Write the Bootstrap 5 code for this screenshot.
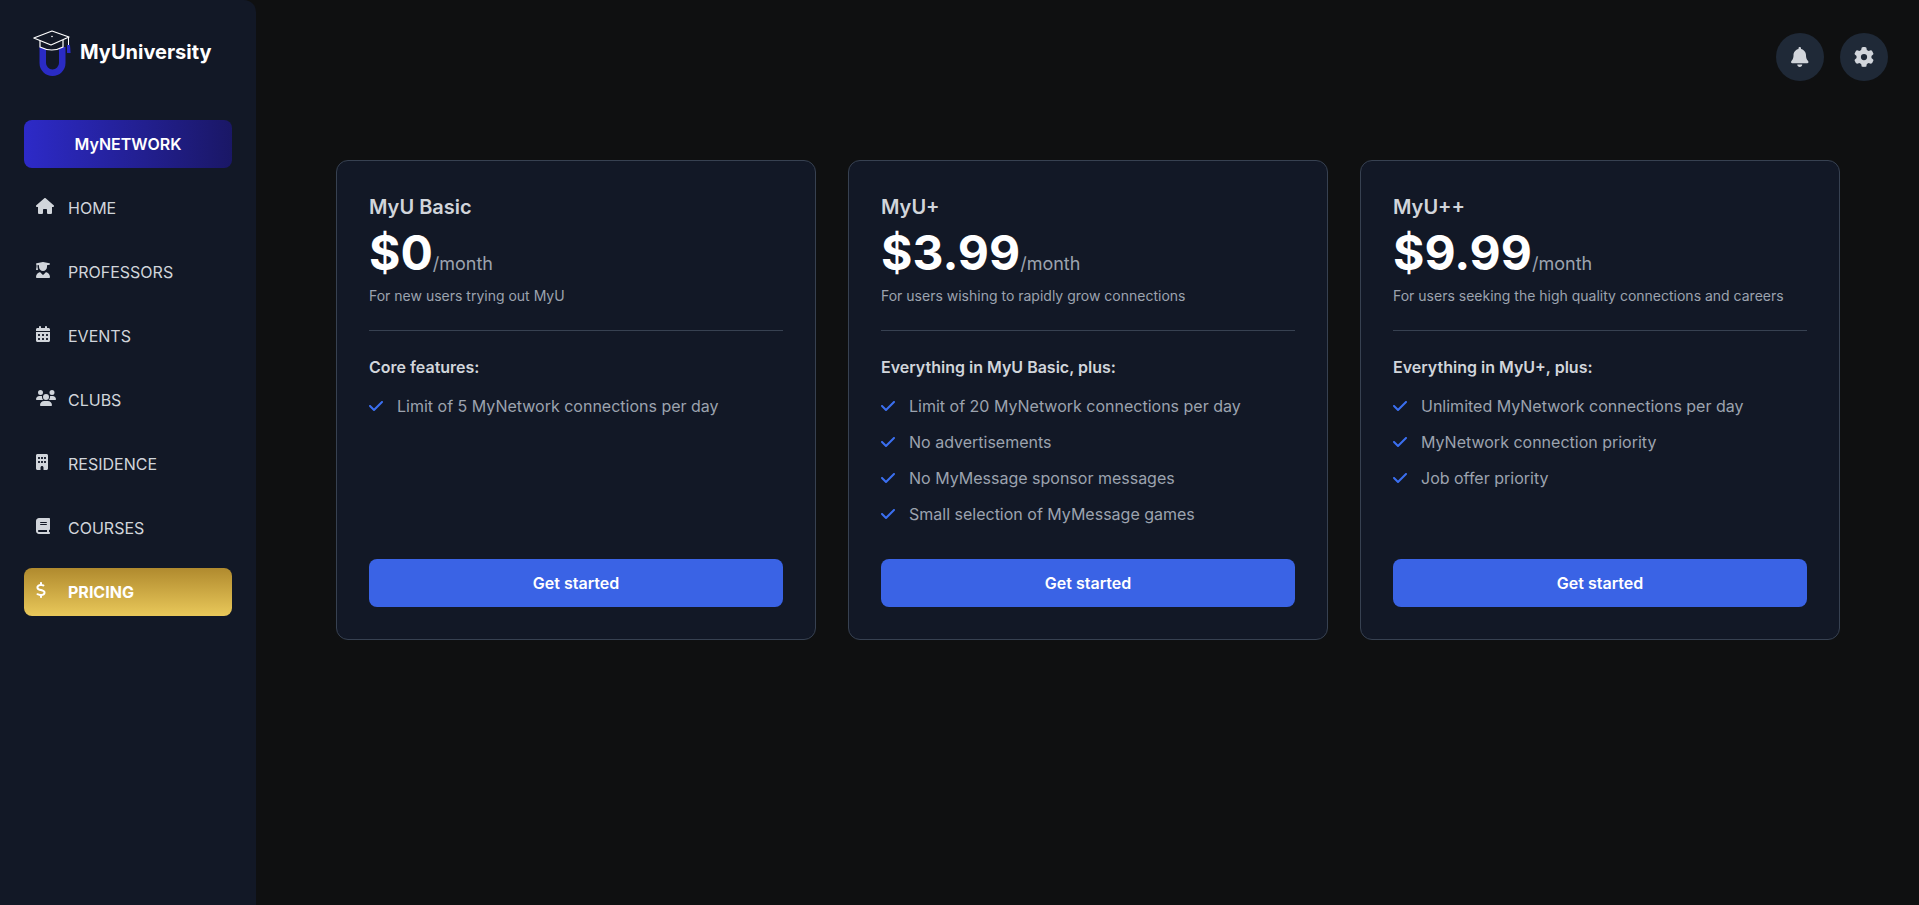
<!DOCTYPE html>
<html lang="en">
<head>
    <meta charset="UTF-8">
    <meta name="viewport" content="width=device-width, initial-scale=1.0">
    <title>MyUniversity - Pricing</title>
    <link href="https://cdn.jsdelivr.net/npm/bootstrap@5.3.0/dist/css/bootstrap.min.css" rel="stylesheet">
    <style>
        body { background: #0f1011; font-family: Inter, "Liberation Sans", sans-serif; color: #d1d5db; }
        .side-bar { width: 256px; height: 905px; background: #121826; border-top-right-radius: 12px; flex-shrink: 0; padding: 24px; }
        .brand-row { height: 48px; margin-bottom: 44px; margin-left: 9px; margin-top: 4px; }
        .brand-row svg { margin-top: 3px; flex-shrink: 0; }
        .brand-name { font-size: 20px; font-weight: 700; color: #fff; margin-left: 9px; }
        .side-link { height: 48px; border-radius: 8px; padding-left: 12px; color: #d1d5db; font-size: 16px; font-weight: 400; text-decoration: none; margin-bottom: 16px; }
        .side-link svg { fill: currentColor; height: 16px; width: auto; margin-top: -4px; }
        .link-ico { width: 32px; display: inline-flex; flex-shrink: 0; }
        .net-btn { background: linear-gradient(to right, #2d2ac8, #1a1766); color: #fff; font-weight: 600; justify-content: center; padding-left: 0; }
        .price-link { background: linear-gradient(to bottom, #b08a2e, #e9c85a); color: #fff; font-weight: 700; }
        .round-btn { width: 48px; height: 48px; border-radius: 50%; background: #1f2937; border: 0; color: #d1d5db; padding: 0; }
        .round-btn svg { fill: currentColor; height: 20px; width: auto; }
        .top-row { padding: 33px 31px 0 0; gap: 16px; }
        .plan-grid { display: grid; grid-template-columns: repeat(3, 1fr); gap: 32px; padding: 79px 79px 0 80px; }
        .plan-box { height: 480px; background: #121826; border: 1px solid #374151; border-radius: 12px; padding: 32px; }
        .plan-name { font-size: 20px; font-weight: 600; color: #d1d5db; line-height: 28px; margin: 0; }
        .plan-price { font-size: 48px; font-weight: 700; color: #fff; line-height: 44px; margin-top: 10px; }
        .plan-per { font-size: 18px; font-weight: 400; color: #9ca3af; }
        .plan-note { font-size: 14px; color: #9ca3af; line-height: 20px; }
        .plan-rule { border-top: 1px solid #374151; margin: 24px 0; }
        .plan-head { font-size: 16px; font-weight: 600; color: #d1d5db; line-height: 24px; margin-bottom: 15px; }
        .plan-list { font-size: 16px; color: #9ca3af; line-height: 24px; gap: 12px; }
        .plan-list svg { height: 16px; width: 14px; margin-right: 14px; flex-shrink: 0; fill: #3b6ff0; }
        .plan-btn { background: #3a63e5; color: #fff; font-weight: 600; font-size: 16px; height: 48px; border-radius: 8px; border: 0; width: 100%; margin-top: auto; }
    </style>
</head>
<body class="m-0">
    <div class="d-flex">
        <!-- Sidebar -->
        <nav class="side-bar d-flex flex-column">
            <div class="brand-row d-flex align-items-center">
                <svg width="38" height="47" viewBox="0 0 38 47">
                    <path d="M6.5 17V33a13 13 0 0 0 26 0V17h-6.5V33a6.5 6.5 0 0 1-13 0V17z" fill="#2a2bc4"/>
                    <path d="M7 10V17Q19 23 30 17V10" fill="#121826" stroke="#fff" stroke-width="1.2"/>
                    <path d="M.8 8L19 1 36 7 18 15z" fill="#121826" stroke="#fff" stroke-width="1.2" stroke-linejoin="round"/>
                    <circle cx="19" cy="6.5" r=".8" fill="#fff"/>
                    <path d="M35.5 7V15" stroke="#fff" stroke-width="1"/>
                    <path d="M34 15h3l.6 8h-3.6z" fill="#2a2bc4"/>
                </svg>
                <span class="brand-name">MyUniversity</span>
            </div>
            <a href="#" class="side-link net-btn d-flex align-items-center">MyNETWORK</a>
            <a href="#" class="side-link d-flex align-items-center"><span class="link-ico"><svg viewBox="0 0 576 512"><path d="M575.8 255.5c0 18-15 32.1-32 32.1h-32l.7 160.2c0 2.7-.2 5.4-.5 8.1V472c0 22.1-17.9 40-40 40H456c-1.1 0-2.2 0-3.3-.1c-1.4 .1-2.8 .1-4.2 .1H416 392c-22.1 0-40-17.9-40-40V448 384c0-17.7-14.3-32-32-32H256c-17.7 0-32 14.3-32 32v64 24c0 22.1-17.9 40-40 40H160 128.1c-1.5 0-3-.1-4.5-.2c-1.2 .1-2.4 .2-3.6 .2H104c-22.1 0-40-17.9-40-40V360c0-.9 0-1.9 .1-2.8V287.6H32c-18 0-32-14-32-32.1c0-9 3-17 10-24L266.4 8c7-7 15-8 22-8s15 2 21 7L564.8 231.5c8 7 12 15 11 24z"/></svg></span>HOME</a>
            <a href="#" class="side-link d-flex align-items-center"><span class="link-ico"><svg viewBox="0 0 448 512"><path d="M219.3 .5c3.1-.6 6.3-.6 9.4 0l200 40C439.9 42.7 448 52.6 448 64s-8.1 21.3-19.3 23.5L352 102.9V160c0 70.7-57.3 128-128 128s-128-57.3-128-128V102.9L48 93.3v65.1l15.7 78.4c.9 4.7-.3 9.6-3.3 13.3s-7.6 5.9-12.4 5.9H16c-4.8 0-9.3-2.1-12.4-5.9s-4.3-8.6-3.3-13.3L16 158.4V86.6C6.5 83.3 0 74.3 0 64C0 52.6 8.1 42.7 19.3 40.5l200-40zM111.9 327.7c10.5-3.4 21.8 .4 29.4 8.5l71 75.5c6.3 6.7 17 6.7 23.3 0l71-75.5c7.6-8.1 18.9-11.9 29.4-8.5C401 348.6 448 409.4 448 481.3c0 17-13.8 30.7-30.7 30.7H30.7C13.8 512 0 498.2 0 481.3c0-71.9 47-132.7 111.9-153.6z"/></svg></span>PROFESSORS</a>
            <a href="#" class="side-link d-flex align-items-center"><span class="link-ico"><svg viewBox="0 0 448 512"><path d="M128 0c17.7 0 32 14.3 32 32V64H288V32c0-17.7 14.3-32 32-32s32 14.3 32 32V64h48c26.5 0 48 21.5 48 48v48H0V112C0 85.5 21.5 64 48 64H96V32c0-17.7 14.3-32 32-32zM0 192H448V464c0 26.5-21.5 48-48 48H48c-26.5 0-48-21.5-48-48V192zm64 80v32c0 8.8 7.2 16 16 16h32c8.8 0 16-7.2 16-16V272c0-8.8-7.2-16-16-16H80c-8.8 0-16 7.2-16 16zm128 0v32c0 8.8 7.2 16 16 16h32c8.8 0 16-7.2 16-16V272c0-8.8-7.2-16-16-16H208c-8.8 0-16 7.2-16 16zm144-16c-8.8 0-16 7.2-16 16v32c0 8.8 7.2 16 16 16h32c8.8 0 16-7.2 16-16V272c0-8.8-7.2-16-16-16H336zM64 400v32c0 8.8 7.2 16 16 16h32c8.8 0 16-7.2 16-16V400c0-8.8-7.2-16-16-16H80c-8.8 0-16 7.2-16 16zm144-16c-8.8 0-16 7.2-16 16v32c0 8.8 7.2 16 16 16h32c8.8 0 16-7.2 16-16V400c0-8.8-7.2-16-16-16H208zm112 16v32c0 8.8 7.2 16 16 16h32c8.8 0 16-7.2 16-16V400c0-8.8-7.2-16-16-16H336c-8.8 0-16 7.2-16 16z"/></svg></span>EVENTS</a>
            <a href="#" class="side-link d-flex align-items-center"><span class="link-ico"><svg viewBox="0 0 640 512"><path d="M144 0a80 80 0 1 1 0 160A80 80 0 1 1 144 0zM512 0a80 80 0 1 1 0 160A80 80 0 1 1 512 0zM0 298.7C0 239.8 47.8 192 106.7 192h42.7c15.9 0 31 3.5 44.6 9.7c-1.3 7.2-1.9 14.7-1.9 22.3c0 38.2 16.8 72.5 43.3 96c-.2 0-.4 0-.7 0H21.3C9.6 320 0 310.4 0 298.7zM405.3 320c-.2 0-.4 0-.7 0c26.6-23.5 43.3-57.8 43.3-96c0-7.6-.7-15-1.9-22.3c13.6-6.3 28.7-9.7 44.6-9.7h42.7C592.2 192 640 239.8 640 298.7c0 11.8-9.6 21.3-21.3 21.3H405.3zM224 224a96 96 0 1 1 192 0 96 96 0 1 1 -192 0zM128 485.3C128 411.7 187.7 352 261.3 352H378.7C452.3 352 512 411.7 512 485.3c0 14.7-11.9 26.7-26.7 26.7H154.7c-14.7 0-26.7-11.9-26.7-26.7z"/></svg></span>CLUBS</a>
            <a href="#" class="side-link d-flex align-items-center"><span class="link-ico"><svg viewBox="0 0 384 512"><path d="M48 0C21.5 0 0 21.5 0 48V464c0 26.5 21.5 48 48 48h96V432c0-26.5 21.5-48 48-48s48 21.5 48 48v80h96c26.5 0 48-21.5 48-48V48c0-26.5-21.5-48-48-48H48zM64 240c0-8.8 7.2-16 16-16h32c8.8 0 16 7.2 16 16v32c0 8.8-7.2 16-16 16H80c-8.8 0-16-7.2-16-16V240zm112-16h32c8.8 0 16 7.2 16 16v32c0 8.8-7.2 16-16 16H176c-8.8 0-16-7.2-16-16V240c0-8.8 7.2-16 16-16zm80 16c0-8.8 7.2-16 16-16h32c8.8 0 16 7.2 16 16v32c0 8.8-7.2 16-16 16H272c-8.8 0-16-7.2-16-16V240zM80 96h32c8.8 0 16 7.2 16 16v32c0 8.8-7.2 16-16 16H80c-8.8 0-16-7.2-16-16V112c0-8.8 7.2-16 16-16zm80 16c0-8.8 7.2-16 16-16h32c8.8 0 16 7.2 16 16v32c0 8.8-7.2 16-16 16H176c-8.8 0-16-7.2-16-16V112zM272 96h32c8.8 0 16 7.2 16 16v32c0 8.8-7.2 16-16 16H272c-8.8 0-16-7.2-16-16V112c0-8.8 7.2-16 16-16z"/></svg></span>RESIDENCE</a>
            <a href="#" class="side-link d-flex align-items-center"><span class="link-ico"><svg viewBox="0 0 448 512"><path d="M96 0C43 0 0 43 0 96V416c0 53 43 96 96 96H384h32c17.7 0 32-14.3 32-32s-14.3-32-32-32V384c17.7 0 32-14.3 32-32V32c0-17.7-14.3-32-32-32H384 96zm0 384H352v64H96c-17.7 0-32-14.3-32-32s14.3-32 32-32zm32-240c0-8.8 7.2-16 16-16H336c8.8 0 16 7.2 16 16s-7.2 16-16 16H144c-8.8 0-16-7.2-16-16zm16 48H336c8.8 0 16 7.2 16 16s-7.2 16-16 16H144c-8.8 0-16-7.2-16-16s7.2-16 16-16z"/></svg></span>COURSES</a>
            <a href="#" class="side-link price-link d-flex align-items-center"><span class="link-ico"><svg viewBox="0 0 320 512"><path d="M160 0c17.7 0 32 14.3 32 32V67.7c1.6 .2 3.1 .4 4.7 .7c.4 .1 .7 .1 1.1 .2l48 8.8c17.4 3.2 28.9 19.9 25.7 37.2s-19.9 28.9-37.2 25.7l-47.5-8.7c-31.3-4.6-58.9-1.5-78.3 6.2s-27.2 18.3-29 28.1c-2 10.7-.5 16.7 1.2 20.4c1.8 3.9 5.5 8.3 12.8 13.2c16.3 10.7 41.3 17.7 73.7 26.3l2.9 .8c28.6 7.6 63.6 16.8 89.6 33.8c14.2 9.3 27.6 21.9 35.9 39.5c8.5 17.9 10.3 37.9 6.4 59.2c-6.9 38-33.1 63.4-65.6 76.7c-13.7 5.6-28.6 9.2-44.4 11V480c0 17.7-14.3 32-32 32s-32-14.3-32-32V445.1c-.4-.1-.9-.1-1.3-.2l-.2 0 0 0c-24.4-3.8-64.5-14.3-91.5-26.3c-16.1-7.2-23.4-26.1-16.2-42.2s26.1-23.4 42.2-16.2c20.9 9.3 55.3 18.5 75.2 21.6c31.9 4.7 58.2 2 76-5.3c16.9-6.9 24.6-16.9 26.8-28.9c1.9-10.6 .4-16.7-1.3-20.4c-1.9-4-5.6-8.4-13-13.3c-16.4-10.7-41.5-17.7-74-26.3l-2.8-.7 0 0C119.4 279.3 84.4 270 58.4 253c-14.2-9.3-27.5-22-35.8-39.6c-8.4-17.9-10.1-37.9-6.1-59.2C23.7 116 52.3 91.2 84.8 78.3c13.3-5.3 27.9-8.9 43.2-11V32c0-17.7 14.3-32 32-32z"/></svg></span>PRICING</a>
        </nav>

        <!-- Main -->
        <main class="flex-grow-1">
            <div class="top-row d-flex justify-content-end">
                <button class="round-btn d-flex align-items-center justify-content-center" aria-label="Notifications"><svg viewBox="0 0 448 512"><path d="M224 0c-17.7 0-32 14.3-32 32V51.2C119 66 64 130.6 64 208v18.8c0 47-17.3 92.4-48.5 127.6l-7.4 8.3c-8.4 9.4-10.4 22.9-5.3 34.4S19.4 416 32 416H416c12.6 0 24-7.4 29.2-18.9s3.1-25-5.3-34.4l-7.4-8.3C401.3 319.2 384 273.9 384 226.8V208c0-77.4-55-142-128-156.8V32c0-17.7-14.3-32-32-32zm45.3 493.3c12-12 18.7-28.3 18.7-45.3H224 160c0 17 6.7 33.3 18.7 45.3s28.3 18.7 45.3 18.7s33.3-6.7 45.3-18.7z"/></svg></button>
                <button class="round-btn d-flex align-items-center justify-content-center" aria-label="Settings"><svg viewBox="0 0 512 512"><path d="M495.9 166.6c3.2 8.7 .5 18.4-6.4 24.6l-43.3 39.4c1.1 8.3 1.7 16.8 1.7 25.4s-.6 17.1-1.7 25.4l43.3 39.4c6.9 6.2 9.6 15.9 6.4 24.6c-4.4 11.9-9.7 23.3-15.8 34.3l-4.7 8.1c-6.6 11-14 21.4-22.1 31.2c-5.9 7.2-15.7 9.6-24.5 6.8l-55.7-17.7c-13.4 10.3-28.2 18.9-44 25.4l-12.5 57.1c-2 9.1-9 16.3-18.2 17.8c-13.8 2.3-28 3.5-42.5 3.5s-28.7-1.2-42.5-3.5c-9.2-1.5-16.2-8.7-18.2-17.8l-12.5-57.1c-15.8-6.5-30.6-15.1-44-25.4L83.1 425.9c-8.8 2.8-18.6 .3-24.5-6.8c-8.1-9.8-15.5-20.2-22.1-31.2l-4.7-8.1c-6.1-11-11.4-22.4-15.8-34.3c-3.2-8.7-.5-18.4 6.4-24.6l43.3-39.4C64.6 273.1 64 264.6 64 256s.6-17.1 1.7-25.4L22.4 191.2c-6.9-6.2-9.6-15.9-6.4-24.6c4.4-11.9 9.7-23.3 15.8-34.3l4.7-8.1c6.6-11 14-21.4 22.1-31.2c5.9-7.2 15.7-9.6 24.5-6.8l55.7 17.7c13.4-10.3 28.2-18.9 44-25.4l12.5-57.1c2-9.1 9-16.3 18.2-17.8C227.3 1.2 241.5 0 256 0s28.7 1.2 42.5 3.5c9.2 1.5 16.2 8.7 18.2 17.8l12.5 57.1c15.8 6.5 30.6 15.1 44 25.4l55.7-17.7c8.8-2.8 18.6-.3 24.5 6.8c8.1 9.8 15.5 20.2 22.1 31.2l4.7 8.1c6.1 11 11.4 22.4 15.8 34.3zM256 336a80 80 0 1 0 0-160 80 80 0 1 0 0 160z"/></svg></button>
            </div>

            <div class="plan-grid" id="plans"></div>
        </main>
    </div>

    <script>
    const plans = [
        { name: 'MyU Basic', price: '$0', note: 'For new users trying out MyU', head: 'Core features:',
          items: ['Limit of 5 MyNetwork connections per day'] },
        { name: 'MyU+', price: '$3.99', note: 'For users wishing to rapidly grow connections', head: 'Everything in MyU Basic, plus:',
          items: ['Limit of 20 MyNetwork connections per day', 'No advertisements', 'No MyMessage sponsor messages', 'Small selection of MyMessage games'] },
        { name: 'MyU++', price: '$9.99', note: 'For users seeking the high quality connections and careers', head: 'Everything in MyU+, plus:',
          items: ['Unlimited MyNetwork connections per day', 'MyNetwork connection priority', 'Job offer priority'] }
    ];
    const check = '<svg viewBox="0 0 448 512"><path d="M438.6 105.4c12.5 12.5 12.5 32.8 0 45.3l-256 256c-12.5 12.5-32.8 12.5-45.3 0l-128-128c-12.5-12.5-12.5-32.8 0-45.3s32.8-12.5 45.3 0L160 338.7 393.4 105.4c12.5-12.5 32.8-12.5 45.3 0z"/></svg>';

    document.getElementById('plans').innerHTML = plans.map(p => `
        <div class="plan-box d-flex flex-column">
            <h3 class="plan-name">${p.name}</h3>
            <div class="plan-price">${p.price}<span class="plan-per">/month</span></div>
            <div class="plan-note">${p.note}</div>
            <div class="plan-rule"></div>
            <div class="plan-head">${p.head}</div>
            <ul class="plan-list list-unstyled d-flex flex-column m-0">
                ${p.items.map(i => `<li class="d-flex align-items-center">${check}${i}</li>`).join('')}
            </ul>
            <button class="plan-btn">Get started</button>
        </div>`).join('');
    </script>
    <script src="https://cdn.jsdelivr.net/npm/bootstrap@5.3.0/dist/js/bootstrap.bundle.min.js"></script>
</body>
</html>
